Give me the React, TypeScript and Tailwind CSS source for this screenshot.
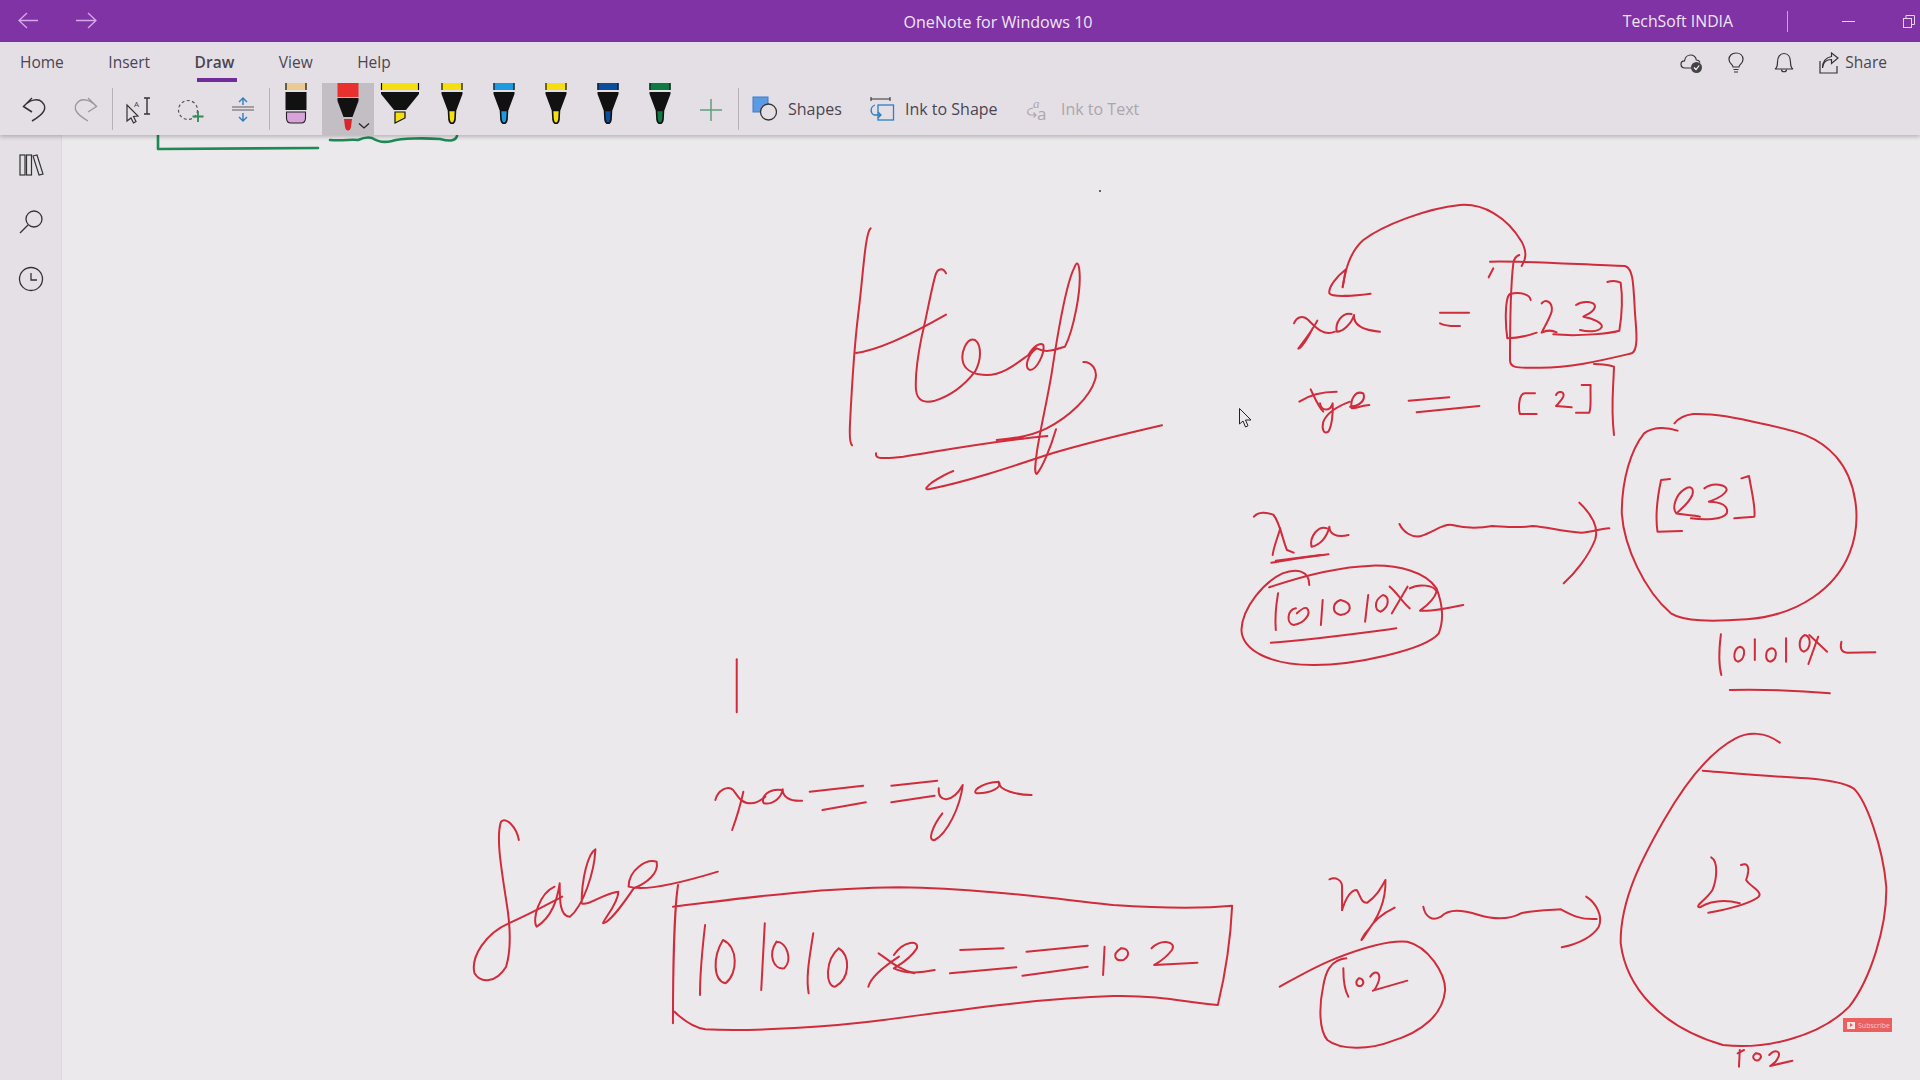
import React from "react";

const group7 = [
  "M152 115 C135 130 130 250 115 370 C105 450 95 600 90 700 C88 740 90 760 96 766",
  "M108 489 C180 480 280 430 378 374",
  "M378 250 C370 232 355 235 348 250 C335 290 320 380 305 440 C295 490 285 560 288 600 C292 635 315 640 345 632 C390 618 430 590 465 545 C485 510 485 465 465 450 C440 440 420 490 430 520 C440 545 470 555 500 555 C550 555 590 520 625 495 C640 470 660 455 670 465 C675 490 650 540 630 540 C610 535 625 490 650 475 C680 490 700 480 735 470 C760 420 785 300 778 240 C775 215 770 215 762 235 C735 290 710 450 695 550 C680 640 660 720 650 790 C645 830 643 850 650 852 C665 835 690 780 708 718",
  "M790 516 C815 515 835 540 825 570 C810 620 750 680 680 715 C640 735 600 745 530 750 L610 745",
  "M168 790 C165 810 195 805 250 800 C350 785 500 755 682 738",
  "M1026 706 C900 735 780 765 680 795 C560 835 440 875 330 897 C310 900 320 890 335 878 C355 865 375 852 400 843",
];
const group8 = [
  "M368 292 C372 270 375 250 378 238 C350 260 325 290 328 310 C335 322 400 318 452 311",
  "M368 290 C375 250 385 190 430 150 C490 105 620 55 720 45 C790 40 860 80 905 155 C920 185 920 205 905 228",
  "M810 215 C920 212 1100 225 1215 228 C1240 235 1240 280 1245 370 C1250 430 1255 480 1235 490 C1150 510 1050 535 950 533 C880 535 870 530 870 510 C870 400 870 300 880 220 C882 205 890 198 898 195",
  "M820 235 L806 262",
  "M932 330 C930 312 900 305 870 312 C855 320 855 400 862 445 C890 445 930 435 950 428",
  "M965 340 C975 325 1000 335 995 365 C985 395 970 415 965 428 C980 420 995 420 1010 427",
  "M1068 345 C1090 330 1125 335 1125 350 C1120 370 1095 375 1090 380 C1120 385 1150 400 1145 412 C1135 428 1100 425 1080 420",
  "M1000 433 C1080 440 1170 430 1198 422 C1205 380 1208 320 1202 278 C1190 272 1175 272 1162 276",
  "M222 400 C230 380 250 375 265 390 C285 410 310 440 345 425",
  "M292 392 C275 425 250 455 235 476 C250 470 265 440 278 415",
  "M395 372 C365 365 345 400 350 425 C370 425 395 400 402 375 C400 400 420 420 480 425",
  "M660 368 L747 368",
  "M660 400 C680 410 700 408 720 408",
  "M238 635 C260 620 300 605 350 605",
  "M272 598 C285 625 295 650 310 665",
  "M300 640 C305 665 330 665 338 640 C340 670 335 710 325 725 C310 735 305 715 310 695 C320 670 350 650 390 635",
  "M390 650 C410 650 440 635 430 610 C405 600 390 630 395 655 C410 655 430 645 448 645",
  "M566 632 L688 622",
  "M590 667 L778 648",
  "M945 610 L915 610 C895 610 895 660 900 672 L950 672",
  "M1008 615 C1015 600 1035 605 1030 620 C1025 632 1015 640 1008 648 L1055 652",
  "M1085 585 L1112 585 C1110 610 1115 650 1108 668 L1068 668",
  "M1122 522 C1145 522 1165 524 1182 530 C1180 600 1172 650 1182 735",
];
const group9 = [
  "M1025 92 C1000 80 970 80 950 100 C920 150 900 240 900 340 C905 440 950 570 1010 640 C1040 665 1100 665 1180 658 C1300 645 1380 560 1410 460 C1440 360 1425 240 1380 170 C1340 110 1300 95 1210 70 C1150 50 1100 40 1060 42 C1040 45 1025 58 1018 70",
  "M1008 237 L988 240 C980 290 975 350 980 395 L1035 393",
  "M1040 268 C1020 285 1012 325 1022 340 C1035 345 1060 345 1075 350 M1040 268 C1055 255 1062 265 1058 285 C1050 310 1035 325 1022 340",
  "M1085 265 C1105 245 1135 255 1135 270 C1130 290 1105 300 1095 305 C1125 305 1140 320 1135 340 C1125 360 1085 360 1055 355",
  "M1168 235 L1185 228 C1190 270 1200 320 1197 350 L1152 355",
  "M402 372 C410 395 430 415 450 408 C480 395 500 370 520 375 C550 385 580 385 610 378 C640 380 670 385 700 378 C730 380 770 395 810 398 C830 395 850 388 872 385",
  "M805 308 C830 340 850 380 840 420 C825 470 795 520 770 550",
  "M76 350 C85 335 105 335 120 345 C135 370 140 420 150 450 L165 458",
  "M135 385 C130 410 120 440 118 465",
  "M240 385 C220 375 200 410 205 440 C225 435 240 410 245 380 C245 400 260 415 288 405",
  "M115 488 C150 480 200 470 243 463",
  "M125 482 L225 465",
  "M200 555 C200 510 170 505 140 520 C100 545 50 620 48 690 C50 750 110 795 210 795 C300 795 460 750 490 700 C505 650 495 600 485 565 C460 515 400 495 340 497 C270 500 180 530 110 562",
  "M130 580 C125 620 123 660 125 690",
  "M170 625 C150 630 148 670 165 675 C190 670 205 640 195 625 C190 620 180 630 172 640",
  "M230 600 L226 675",
  "M270 600 C250 610 250 640 270 645 C295 640 300 610 270 600",
  "M332 585 L325 665",
  "M365 585 C345 600 345 630 360 635 C380 620 380 590 365 585",
  "M380 560 C395 575 410 610 425 625",
  "M420 560 L385 640",
  "M425 565 C445 550 480 555 485 575 C480 600 460 620 448 632 C470 635 510 625 545 615",
  "M114 728 C200 720 310 700 395 685",
  "M1122 703 C1118 745 1116 790 1123 825",
  "M1165 740 C1150 745 1148 780 1160 785 C1175 780 1180 745 1165 740",
  "M1198 718 L1198 780",
  "M1235 745 C1220 750 1220 780 1232 785 C1248 780 1250 745 1235 745",
  "M1268 715 L1268 785",
  "M1310 705 C1295 715 1295 750 1308 755 C1325 745 1325 710 1310 705",
  "M1320 705 L1360 755",
  "M1340 710 L1318 792",
  "M1392 725 C1388 745 1392 758 1405 758 L1468 757",
  "M1142 870 C1220 868 1300 872 1366 880",
];
const group10 = [
  "M562 58 L562 217",
  "M520 480 C525 450 545 435 555 450 C565 470 570 490 590 490 C600 490 610 480 618 470",
  "M575 455 C570 490 560 540 553 570",
  "M650 450 C625 445 608 470 615 490 C635 495 650 470 652 448 C652 470 665 485 690 482",
  "M705 455 L810 437",
  "M730 510 L815 487",
  "M865 437 L955 422",
  "M865 487 L950 467",
  "M958 445 C955 490 985 490 1005 435 C1000 500 975 580 950 600 C935 605 945 560 965 520",
  "M1075 425 C1035 430 1020 460 1035 460 C1060 460 1085 440 1075 425 C1075 450 1110 465 1140 465",
  "M135 600 C130 560 110 530 100 545 C90 590 100 680 110 780 C120 870 120 930 110 980 C90 1030 60 1030 48 1000 C40 950 70 880 115 850 C160 820 195 790 220 770",
  "M205 740 C175 760 160 840 170 860 C200 830 210 780 215 730 C215 780 215 830 235 830 C260 800 283 700 285 628 C270 640 258 720 258 790 C270 800 300 760 330 755 C330 790 300 840 300 850 C315 845 340 790 360 745 C385 730 410 700 405 665 C385 655 350 690 350 740 C380 755 450 730 525 695",
  "M447 735 C440 800 437 1000 437 1150",
  "M437 800 C550 780 700 745 880 742 C1050 745 1200 780 1300 795 C1400 805 1480 805 1533 797 C1530 900 1520 1000 1505 1095 C1450 1090 1400 1065 1300 1068 C1150 1075 1000 1110 850 1140 C750 1160 600 1175 500 1168 C470 1160 450 1130 440 1115",
  "M500 855 C495 920 490 1000 490 1065",
  "M535 900 C515 950 515 1020 540 1030 C565 1000 565 920 535 900",
  "M617 850 L610 1050",
  "M640 905 C622 945 635 990 655 985 C672 960 660 905 640 905",
  "M712 880 C705 950 697 1010 703 1060",
  "M762 925 C735 960 735 1040 755 1040 C785 1015 785 945 762 925",
  "M840 940 C860 960 880 990 910 1000",
  "M880 950 C850 980 825 1010 820 1040",
  "M870 945 C890 900 920 900 915 925 C900 960 880 975 870 985 C890 1000 920 1000 950 990",
  "M1000 930 L1085 925",
  "M980 1000 L1110 982",
  "M1130 935 L1250 917",
  "M1122 1007 L1250 980",
  "M1283 920 L1280 1005",
  "M1315 925 C1295 945 1305 965 1320 960 C1335 945 1330 925 1315 925",
  "M1375 925 C1395 895 1425 905 1415 930 C1400 960 1385 970 1380 975 L1465 968",
];
const group11 = [
  "M1235 68 C1200 35 1160 35 1130 55 C1070 95 1010 190 960 300 C910 410 855 540 857 670 C870 800 950 920 1100 975 C1200 990 1330 950 1400 860 C1450 780 1490 620 1488 500 C1480 380 1440 240 1410 205 C1390 190 1350 180 1300 175 C1220 170 1130 160 1052 152",
  "M1072 412 C1090 425 1085 480 1075 510 C1060 540 1030 560 1045 562 C1075 540 1110 540 1140 550",
  "M1143 435 C1160 425 1165 445 1155 480 C1165 500 1195 515 1185 530 C1160 555 1100 570 1065 578",
  "M165 478 C180 470 195 480 195 500 L195 570",
  "M195 570 C205 530 215 510 230 510 C240 530 240 550 255 548 C275 530 285 510 298 480 C300 540 280 600 250 640 C235 670 240 665 255 635 C270 600 300 575 320 563",
  "M388 560 C392 590 410 605 430 590 C450 565 480 570 520 585 C560 600 590 600 620 580 C650 570 690 570 715 568 C740 585 760 600 800 597",
  "M775 530 C800 550 815 590 805 620 C790 650 760 670 717 682",
  "M47 800 C90 770 130 740 180 715 C250 680 310 660 350 665 C400 680 440 760 440 810 C435 880 390 935 310 965 C260 990 190 990 160 960 C140 930 140 860 150 800 C155 760 165 720 205 715",
  "M198 745 C198 780 200 810 210 830",
  "M235 775 C225 785 228 800 240 798 C250 790 245 775 235 775",
  "M262 770 C275 745 290 760 280 790 C275 805 270 812 268 812 L350 782",
  "M1140 990 L1138 1040",
  "M1135 1000 L1150 990",
  "M1178 1000 C1165 1010 1175 1025 1185 1020 C1195 1010 1190 1000 1178 1000",
  "M1210 1005 C1225 985 1240 995 1230 1015 C1225 1030 1215 1035 1212 1038 L1265 1022",
];

function InkGroup({ paths, t }: { paths: string[]; t: string }) {
  return (
    <g transform={t}>
      {paths.map((d, i) => (
        <path key={i} d={d} vectorEffect="non-scaling-stroke" />
      ))}
    </g>
  );
}

function Pen({ band, tip }: { band: string; tip: string }) {
  return (
    <svg width="52" height="52" viewBox="0 0 52 52" className="block">
      <rect x="15.5" y="0" width="21" height="7" fill={band} />
      <path d="M16 0V7M36 0V7" stroke="#111" strokeWidth="1.2" />
      <path d="M15.5 9H36.5V11L30.5 27H21.5L15.5 11Z" fill="#111" />
      <path d="M22.5 27.5H29.5L29 36.5C28.6 39 27.5 40.3 26 40.3C24.5 40.3 23.4 39 23 36.5Z" fill={tip} stroke="#111" strokeWidth="1.6" />
    </svg>
  );
}

function Sep() {
  return <div className="w-px h-[42px] bg-[#b5b1b7] shrink-0 mt-[5px]" />;
}

function Slot({ children, selected }: { children: React.ReactNode; selected?: boolean }) {
  return <div className={selected ? "w-[52px] h-[52px] shrink-0 bg-[#c3bec4]" : "w-[52px] h-[52px] shrink-0"}>{children}</div>;
}

function Ico({ children }: { children: React.ReactNode }) {
  return (
    <svg width="52" height="52" viewBox="0 0 52 52" fill="none" className="block">
      {children}
    </svg>
  );
}

export default function App() {
  const font = { fontFamily: '"Open Sans", "Noto Sans", sans-serif' };
  return (
    <div className="w-[1920px] h-[1080px] flex flex-col overflow-hidden bg-[#ebe9ec]" style={font}>
      <div className="h-[42px] shrink-0 bg-[#7f33a5] flex items-center relative text-[#efe6f3]">
        <svg width="110" height="42" viewBox="0 0 110 42" fill="none" stroke="#d9a8e8" strokeWidth="1.3" className="shrink-0">
          <path d="M19 20.5H38M27 13L19 20.5L27 28" />
          <path d="M76 20.5H96M88 13L96 20.5L88 28" />
        </svg>
        <div className="absolute left-[887px] w-[222px] top-[10px] text-center text-[16.1px]">OneNote for Windows 10</div>
        <div className="ml-auto text-[15.8px] mr-[54px] pt-[2px]">TechSoft INDIA</div>
        <div className="w-px h-[21px] bg-[#c9a4da] mr-[54px]" />
        <div className="w-[13px] h-px bg-[#e6d4ee] mr-[48px]" />
        <svg width="12" height="13" viewBox="0 0 12 13" fill="none" stroke="#e6d4ee" className="mr-[5px]">
          <rect x="0.5" y="3.5" width="8" height="9" />
          <path d="M3 3V0.5H11.5V9.5H9" />
        </svg>
      </div>

      <div className="h-[93px] shrink-0 bg-[#e4dfe5] relative z-10 shadow-[0_2px_4px_rgba(0,0,0,0.22)]">
        <div className="h-[41px] flex items-center pl-[20px] text-[15.5px] text-[#4a4550]">
          <div className="flex gap-[44.5px]">
            <span>Home</span>
            <span>Insert</span>
            <span className="relative font-semibold">
              Draw
              <span className="absolute left-[2px] top-[27px] w-[40px] h-[4px] bg-[#6f2c9a]" />
            </span>
            <span>View</span>
            <span>Help</span>
          </div>
          <div className="ml-auto flex items-center mr-[33px]">
            <svg width="24" height="22" viewBox="0 0 24 22" fill="none" stroke="#333" strokeWidth="1.2" className="mr-[24px]">
              <path d="M11 16H5C2.5 16 1 14.3 1 12.3C1 10.3 2.5 8.8 4.5 8.8C5 5.5 7.5 3 10.5 3C13.5 3 15.8 5 16.3 8C18 8 19.5 9 20 10.5" />
              <circle cx="16.5" cy="15.5" r="5.5" fill="#444" stroke="none" />
              <path d="M14 15.5L16 17.5L19.2 13.5" stroke="#fff" />
            </svg>
            <svg width="16" height="22" viewBox="0 0 16 22" fill="none" stroke="#333" strokeWidth="1.2" className="mr-[30px]">
              <path d="M5 15C5 12.5 1 11.5 1 7.5C1 3.5 4 1 8 1C12 1 15 3.5 15 7.5C15 11.5 11 12.5 11 15Z" />
              <path d="M5.5 17.5H10.5M6 20H10" />
            </svg>
            <svg width="20" height="22" viewBox="0 0 20 22" fill="none" stroke="#333" strokeWidth="1.2" className="mr-[25px]">
              <path d="M1 17C3 16 3.5 13 3.5 10C3.5 5 6 1.5 10 1.5C14 1.5 16.5 5 16.5 10C16.5 13 17 16 19 17Z" />
              <path d="M7.5 17.5C7.5 20.5 12.5 20.5 12.5 17.5" />
            </svg>
            <svg width="20" height="22" viewBox="0 0 20 22" fill="none" stroke="#333" strokeWidth="1.2" className="mr-[6px]">
              <path d="M1 9V21H18V14" />
              <path d="M3.5 16C4 10.5 7.5 7.5 12.5 7.5V11.5L19 6L12.5 1V4.5C7.5 5.5 3.5 9 3.5 16Z" />
            </svg>
            <span>Share</span>
          </div>
        </div>
        <div className="h-[52px] flex items-start pl-[8px]">
          <Slot>
            <Ico>
              <path d="M24 15L15.5 23.5L24 29M15.5 23.5C21.5 16.5 30 15 34 19C40 25 36 31 24 38" stroke="#333" strokeWidth="1.5" />
            </Ico>
          </Slot>
          <Slot>
            <Ico>
              <path d="M28 15L36.5 23.5L28 29M36.5 23.5C30.5 16.5 22 15 18 19C12 25 16 31 28 38" stroke="#9b979d" strokeWidth="1.4" />
            </Ico>
          </Slot>
          <Sep />
          <Slot>
            <Ico>
              <path d="M14 22L14 38L18 35L20.5 40L23 38.5L20.5 33.5L25 33Z" stroke="#333" strokeWidth="1.2" fill="#e4dfe5" />
              <text x="21" y="24" fontSize="8" fill="#444" fontFamily="Open Sans">A</text>
              <path d="M31 15H37M34 15V31M31 31H37" stroke="#333" strokeWidth="1.4" />
            </Ico>
          </Slot>
          <Slot>
            <Ico>
              <circle cx="23" cy="27" r="9.5" stroke="#555" strokeWidth="1.2" strokeDasharray="3 2.4" />
              <path d="M33 28V39M27.5 33.5H38.5" stroke="#2f8b57" strokeWidth="1.8" />
            </Ico>
          </Slot>
          <Slot>
            <Ico>
              <path d="M15 24H37M15 27H37" stroke="#8b888d" strokeWidth="1.6" />
              <path d="M26 15V22M22 19L26 15L30 19M26 30V38M22 34L26 38L30 34" stroke="#2a80c6" strokeWidth="1.4" />
            </Ico>
          </Slot>
          <Sep />
          <Slot>
            <svg width="52" height="52" viewBox="0 0 52 52" className="block">
              <rect x="15.5" y="0" width="21" height="7" fill="#ebcb92" />
              <path d="M16 0V7M36 0V7" stroke="#111" strokeWidth="1.2" />
              <rect x="15.5" y="9" width="21" height="18" fill="#111" />
              <path d="M16.5 29H35.5V35C35.5 38.5 33.5 40 31 40H21C18.5 40 16.5 38.5 16.5 35Z" fill="#d8a3db" stroke="#222" strokeWidth="1.1" />
            </svg>
          </Slot>
          <Slot selected>
            <svg width="52" height="52" viewBox="0 0 52 52" className="block">
              <rect x="15.5" y="0" width="21" height="14" fill="#e8302f" />
              <path d="M15.5 15H36.5V18L30.5 34H21.5L15.5 18Z" fill="#111" />
              <path d="M22 36H30L29 44C28.5 46.5 27.5 47.5 26 47.5C24.5 47.5 23.5 46.5 23 44Z" fill="#d8262a" />
              <path d="M37 40.5L42 45L47 40.5" fill="none" stroke="#222" strokeWidth="1.3" />
            </svg>
          </Slot>
          <Slot>
            <svg width="52" height="52" viewBox="0 0 52 52" className="block">
              <rect x="7" y="0" width="38" height="7" fill="#f5df0e" />
              <path d="M7.5 0V7M44.5 0V7" stroke="#111" strokeWidth="1.2" />
              <path d="M7 9H45V11L32 27H20L7 11Z" fill="#111" />
              <path d="M21 29H31V35L21 40Z" fill="#f5df0e" stroke="#111" strokeWidth="1.2" />
            </svg>
          </Slot>
          <Slot><Pen band="#f5df0e" tip="#f5df0e" /></Slot>
          <Slot><Pen band="#1e9be0" tip="#1e9be0" /></Slot>
          <Slot><Pen band="#f5df0e" tip="#f5df0e" /></Slot>
          <Slot><Pen band="#0b4f9c" tip="#0b4f9c" /></Slot>
          <Slot><Pen band="#0e7c42" tip="#0e7c42" /></Slot>
          <Slot>
            <Ico>
              <path d="M25 16V38M14 27H36" stroke="#5f9f7d" strokeWidth="1.5" />
            </Ico>
          </Slot>
          <Sep />
          <div className="h-[52px] flex items-center text-[16px] text-[#4a4550]">
            <svg width="26" height="26" viewBox="0 0 26 26" fill="none" className="ml-[13px] mr-[10px]">
              <rect x="1" y="1" width="15" height="15" fill="#5b9be3" stroke="#3a7cc8" />
              <circle cx="16.5" cy="16" r="8" fill="#e4dfe5" stroke="#333" strokeWidth="1.3" />
            </svg>
            <span className="w-[81px]">Shapes</span>
            <svg width="26" height="26" viewBox="0 0 26 26" fill="none" className="mr-[10px]">
              <path d="M2 3H21M2 1V5M21 1V5" stroke="#333" strokeWidth="1.1" />
              <rect x="9" y="9" width="15.5" height="15" stroke="#2a80c6" strokeWidth="1.3" />
              <path d="M6 9C1 11 1 17 5 19L12 19M9 16L12 19L9 22" stroke="#2a80c6" strokeWidth="1.3" />
            </svg>
            <span className="w-[120px]">Ink to Shape</span>
            <svg width="26" height="38" viewBox="0 0 26 38" fill="none" className="mr-[10px]">
              <text x="8" y="18" fontSize="13" fontStyle="italic" fill="#aaa6ac" fontFamily="Liberation Serif">a</text>
              <text x="12" y="30" fontSize="17" fill="#aaa6ac" fontFamily="Open Sans">a</text>
              <path d="M8 18C2 19 1 23 5 25H11M8.5 22.5L11 25L8.5 27.5" stroke="#aaa6ac" strokeWidth="1.1" />
            </svg>
            <span className="text-[#aaa6ac]">Ink to Text</span>
          </div>
        </div>
      </div>

      <div className="flex-1 flex min-h-0">
        <div className="w-[62px] shrink-0 bg-[#e4e0e6] border-r border-[#dcd8de] pt-[1px] flex flex-col items-center">
          <div className="h-[57px] flex items-center justify-center">
            <svg width="26" height="24" viewBox="0 0 26 24" fill="none" stroke="#333" strokeWidth="1.2">
              <rect x="2" y="2" width="5" height="20" />
              <rect x="8.5" y="2" width="5" height="20" />
              <path d="M15 3L19 2L25 21L21 22Z" />
            </svg>
          </div>
          <div className="h-[57px] flex items-center justify-center">
            <svg width="26" height="26" viewBox="0 0 26 26" fill="none" stroke="#333" strokeWidth="1.3">
              <circle cx="16" cy="10" r="8" />
              <path d="M10 16L2 24" />
            </svg>
          </div>
          <div className="h-[57px] flex items-center justify-center">
            <svg width="26" height="26" viewBox="0 0 26 26" fill="none" stroke="#333" strokeWidth="1.3">
              <circle cx="13" cy="13" r="11.5" />
              <path d="M13 7V14H19" />
            </svg>
          </div>
        </div>
        <div className="flex-1 relative overflow-hidden">
          <svg viewBox="62 135 1858 945" className="absolute inset-0 w-full h-full">
            <g fill="none" stroke="#1f8a55" strokeWidth="2.6" strokeLinecap="round" strokeLinejoin="round">
              <path d="M158 134V149L318 148" />
              <path d="M330 140C345 141 350 139 358 140C365 137 368 137 372 138C378 142 384 143 392 141C402 138 425 138 440 139C448 141 455 142 457 136" />
            </g>
            <g fill="none" stroke="#d02c3b" strokeWidth="2" strokeLinecap="round" strokeLinejoin="round">
              <InkGroup paths={group7} t="translate(820 190) scale(0.33333)" />
              <InkGroup paths={group8} t="translate(1220 190) scale(0.33333)" />
              <InkGroup paths={group9} t="translate(1220 400) scale(0.44643 0.33333)" />
              <InkGroup paths={group10} t="translate(450 640) scale(0.5102 0.33333)" />
              <InkGroup paths={group11} t="translate(1260 720) scale(0.42088 0.33333)" />
            </g>
            <circle cx="1100" cy="191" r="1" fill="#334" />
            <path d="M1239.5 408.5V424L1243 421L1245.5 427L1248 425.8L1245.5 420L1251 420Z" fill="#ebe9ec" stroke="#222" strokeWidth="1" />
          </svg>
          <div className="absolute left-[1781px] top-[883px] w-[49px] h-[14px] bg-[#e9605e] flex items-center pl-[4px] gap-[3px]">
            <div className="w-[8px] h-[7px] bg-[#fbe4e3] flex items-center justify-center">
              <div className="w-0 h-0 border-y-[2px] border-y-transparent border-l-[3px] border-l-[#e9605e]" />
            </div>
            <span className="text-[7px] leading-none text-[#f7c5c3] whitespace-nowrap">Subscribe</span>
          </div>
        </div>
      </div>
    </div>
  );
}
